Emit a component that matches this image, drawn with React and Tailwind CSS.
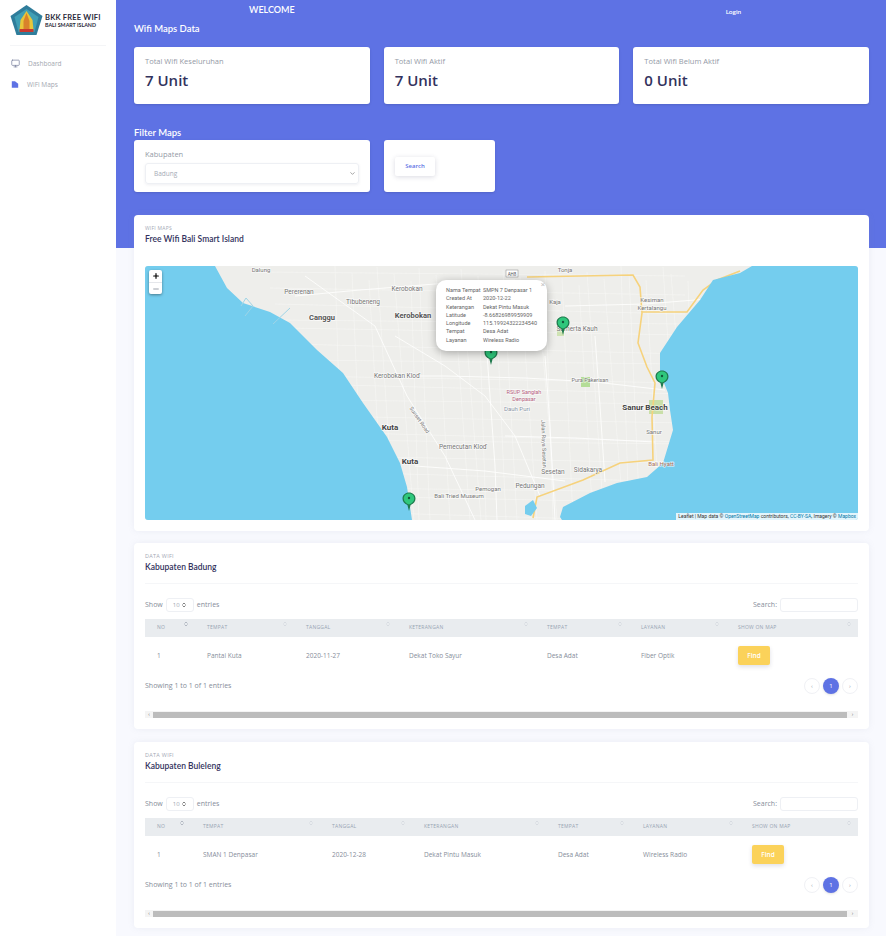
import React from 'react'
import { Monitor, ChevronsUpDown, ChevronDown, Plus, Minus } from 'lucide-react'

const STATS = [
  { label: 'Total Wifi Keseluruhan', value: '7 Unit' },
  { label: 'Total Wifi Aktif', value: '7 Unit' },
  { label: 'Total Wifi Belum Aktif', value: '0 Unit' },
]

const POPUP = [
  ['Nama Tempat', 'SMPN 7 Denpasar 1'],
  ['Created At', '2020-12-22'],
  ['Keterangan', 'Dekat Pintu Masuk'],
  ['Latitude', '-8.66826989959909'],
  ['Longitude', '115.19924322234540'],
  ['Tempat', 'Desa Adat'],
  ['Layanan', 'Wireless Radio'],
]

const HEADERS = ['NO', 'TEMPAT', 'TANGGAL', 'KETERANGAN', 'TEMPAT', 'LAYANAN', 'SHOW ON MAP']

// Thin street mesh for the built-up part of the map
const STREETS = []
for (let i = 0; i < 26; i++) {
  const x = 190 + i * 14 + (i % 3) * 3
  STREETS.push(`M${x} ${(i * 7) % 20} L${x + 8 + (i % 5) * 3} 254`)
}
for (let i = 0; i < 18; i++) {
  const y = 6 + i * 14 + (i % 4) * 2
  STREETS.push(`M${120 + i * 5} ${y} L540 ${y + 4 + (i % 3) * 3}`)
}

function Pin({ x, y }) {
  return (
    <g transform={`translate(${x} ${y})`}>
      <path d="M0 0 L-1.6 -6 C-5 -7.5 -6.5 -9.5 -6.5 -12.5 C-6.5 -16 -3.5 -18.5 0 -18.5 C3.5 -18.5 6.5 -16 6.5 -12.5 C6.5 -9.5 5 -7.5 1.6 -6 Z" fill="#1f7a4d" />
      <path d="M0 -6.5 C-3.4 -7.6 -5.2 -9.8 -5.2 -12.5 C-5.2 -15.4 -2.8 -17.4 0 -17.4 C2.8 -17.4 5.2 -15.4 5.2 -12.5 C5.2 -9.8 3.4 -7.6 0 -6.5 Z" fill="#2fc77c" />
      <circle cx="0" cy="-13" r="1.2" fill="#12583a" />
    </g>
  )
}

function MapLabel({ x, y, children, bold, color = '#777777', size = 6.5, rotate }) {
  return (
    <text
      x={x}
      y={y}
      fontSize={size}
      fontWeight={bold ? 700 : 400}
      fill={color}
      fontFamily="Roboto, sans-serif"
      textAnchor="middle"
      stroke="#ffffff"
      strokeWidth="1.5"
      strokeOpacity="0.6"
      paintOrder="stroke"
      transform={rotate ? `rotate(${rotate} ${x} ${y})` : undefined}
    >
      {children}
    </text>
  )
}

function MapDrawing() {
  return (
    <svg viewBox="0 0 713 254" className="block w-full h-full">
      <rect width="713" height="254" fill="#eeeeeb" />
      {/* street mesh */}
      <g stroke="#f8f8f6" strokeWidth="0.5" fill="none">
        {STREETS.map((d, i) => <path key={i} d={d} />)}
      </g>
      {/* bigger streets */}
      <g stroke="#ffffff" strokeWidth="0.9" fill="none" opacity="0.9">
        <path d="M160 10 L230 60 L262 130 L300 190 L330 254" />
        <path d="M150 30 L215 24 L290 18 L370 14" />
        <path d="M250 70 L300 100 L340 130 L370 170 L395 230" />
        <path d="M230 110 L300 110 L380 112 L450 116 L520 124" />
        <path d="M340 60 L345 130 L350 200 L352 254" />
        <path d="M400 90 L405 160 L410 254" />
        <path d="M420 40 L500 38 L600 30" />
        <path d="M360 170 L430 172 L510 176" />
        <path d="M270 200 L340 205 L420 215" />
        <path d="M450 70 L455 140 L460 216" />
      </g>
      {/* parks */}
      <rect x="436" y="111" width="9" height="10" fill="#b4dd97" />
      <rect x="504" y="134" width="14" height="14" fill="#c9dfa8" />
      <rect x="412" y="62" width="7" height="8" fill="#cfe3b4" />
      {/* main roads */}
      <g stroke="#f6d27c" strokeWidth="1.6" fill="none">
        <path d="M382 11 L488 9 L495 21 L497 47 L493 77 L502 101 L510 117 L507 151 L508 194 L475 197 L438 214 L392 231 L388 252" />
        <path d="M497 46 L542 46 L558 24 L572 14 L595 5" />
      </g>
      {/* sea */}
      <path d="M70 0 L82 22 L98 37 L125 46 L145 57 L172 84 L198 107 L218 137 L242 171 L255 197 L262 221 L267 254 L0 254 L0 0 Z" fill="#74cdee" />
      <path d="M607 0 L595 7 L568 14 L555 34 L532 61 L515 87 L515 107 L523 127 L525 144 L528 164 L518 197 L502 211 L472 217 L445 227 L418 241 L415 251 L417 254 L713 254 L713 0 Z" fill="#74cdee" />
      <path d="M380 240 L388 234 L392 242 L386 250 L380 248 Z" fill="#74cdee" />
      <path d="M96 40 L101 32 L108 40 L100 50 M128 58 L145 42" stroke="#9fd4e6" strokeWidth="1" fill="none" />
      {/* labels */}
      <MapLabel x="116" y="6" size={6}>Dalung</MapLabel>
      <MapLabel x="154" y="28">Pererenan</MapLabel>
      <MapLabel x="218" y="38">Tibubeneng</MapLabel>
      <MapLabel x="177" y="54" bold color="#555555" size={7.5}>Canggu</MapLabel>
      <MapLabel x="262" y="25">Kerobokan</MapLabel>
      <MapLabel x="268" y="52" bold color="#555555" size={7.5}>Kerobokan</MapLabel>
      <MapLabel x="252" y="112">Kerobokan Kloď</MapLabel>
      <MapLabel x="273" y="155" size={5.5} rotate={55}>Sunset Road</MapLabel>
      <MapLabel x="245" y="164" bold color="#444444" size={8}>Kuta</MapLabel>
      <MapLabel x="265" y="198" bold color="#444444" size={8}>Kuta</MapLabel>
      <MapLabel x="318" y="183">Pemecutan Kloď</MapLabel>
      <MapLabel x="314" y="232" size={6}>Bali Tried Museum</MapLabel>
      <MapLabel x="343" y="225" size={6}>Pemogan</MapLabel>
      <MapLabel x="385" y="222">Pedungan</MapLabel>
      <MapLabel x="408" y="208">Sesetan</MapLabel>
      <MapLabel x="443" y="206">Sidakarya</MapLabel>
      <MapLabel x="379" y="128" size={5.5} color="#b4607c">RSUP Sanglah</MapLabel>
      <MapLabel x="379" y="135" size={5.5} color="#b4607c">Denpasar</MapLabel>
      <MapLabel x="372" y="145" size={6} color="#8a94a6">Dauh Puri</MapLabel>
      <MapLabel x="397" y="178" size={5.5} rotate={88}>Jalan Raya Sesetan</MapLabel>
      <MapLabel x="445" y="116" size={5.5}>Pura Pakerisan</MapLabel>
      <MapLabel x="500" y="144" bold color="#444444" size={8}>Sanur Beach</MapLabel>
      <MapLabel x="509" y="168" size={6}>Sanur</MapLabel>
      <MapLabel x="516" y="200" size={6} color="#a8705c">Bali Hyatt</MapLabel>
      <MapLabel x="507" y="36" size={6}>Kesiman</MapLabel>
      <MapLabel x="507" y="44" size={6}>Kertalangu</MapLabel>
      <MapLabel x="420" y="6" size={6}>Tonja</MapLabel>
      <MapLabel x="410" y="38" size={6}>Kaja</MapLabel>
      <MapLabel x="432" y="65">Sumerta Kauh</MapLabel>
      <rect x="361" y="4" width="12" height="7" fill="#ffffff" stroke="#888888" strokeWidth="0.5" />
      <text x="367" y="9.6" fontSize="4.5" fill="#555555" textAnchor="middle" fontFamily="Roboto, sans-serif">AH8</text>
      <Pin x={264} y={245} />
      <Pin x={418} y={69} />
      <Pin x={517} y={123} />
      <Pin x={346} y={99} />
    </svg>
  )
}

function Leaflet() {
  return (
    <div className="relative h-[254px] rounded-[3px] overflow-hidden">
      <MapDrawing />

      <div className="absolute left-[4px] top-[4px] w-[13px] rounded-[2px] bg-white shadow-[0_1px_3px_rgba(0,0,0,0.4)] flex flex-col items-center text-black">
        <span className="h-[12px] flex items-center"><Plus size={8} strokeWidth={3.5} /></span>
        <span className="h-[12px] flex items-center border-t border-gray-200 w-full justify-center text-gray-500"><Minus size={8} strokeWidth={2} /></span>
      </div>

      {/* popup */}
      <div className="absolute left-[291px] top-[14px] w-[111px] h-[71px] pl-[10px] pt-[6px] bg-white rounded-[10px] shadow-[0_2px_8px_rgba(0,0,0,0.3)] text-[5.5px] leading-[8.3px] text-[#666] font-['Roboto',sans-serif]">
        <span className="absolute right-[2px] top-[0px] text-[8px] leading-[10px] text-[#c3c3c3]">×</span>
        {POPUP.map(([k, v]) => (
          <div key={k} className="flex whitespace-nowrap">
            <span className="w-[37px] shrink-0">{k}</span>
            <span>{v}</span>
          </div>
        ))}
      </div>

      <div className="absolute right-0 bottom-0 h-[7px] px-[2px] bg-white/80 text-[5px] leading-[7px] text-[#333] whitespace-nowrap font-['Roboto',sans-serif]">
        Leaflet | Map data © <span className="text-[#0078a8]">OpenStreetMap</span> contributors, <span className="text-[#0078a8]">CC-BY-SA</span>, Imagery © <span className="text-[#0078a8]">Mapbox</span>
      </div>
    </div>
  )
}

function DataTable({ title, gridClass, row }) {
  return (
    <section className="bg-white rounded-[4px] shadow-[0_0_6px_rgba(136,152,170,0.12)] px-[11px]">
      <div className="pt-[9px] pb-[9px] border-b border-[#f5f6f8]">
        <p className="text-[5.5px] leading-[8px] text-[#a4a9b5] tracking-wider">DATA WIFI</p>
        <h3 className="text-[8.5px] leading-[14px] font-semibold text-[#32325d] font-['Lato',sans-serif]">{title}</h3>
      </div>

      <div className="mt-[14px] flex items-center justify-between text-[7px] text-[#868d9a]">
        <div className="flex items-center gap-[3px]">
          <span>Show</span>
          <span className="w-[28px] h-[14px] border border-[#eef0f4] rounded-[3px] flex items-center justify-between px-[6px] text-[6px] text-[#a0a6b2]">
            10
            <ChevronsUpDown size={6} strokeWidth={3} className="text-[#555]" />
          </span>
          <span>entries</span>
        </div>
        <div className="flex items-center gap-[3px]">
          <span>Search:</span>
          <span className="w-[78px] h-[14px] border border-[#eef0f4] rounded-[3px]" />
        </div>
      </div>

      <div className={`mt-[7px] h-[18px] bg-[#e9ecef] grid ${gridClass} items-center text-[5px] tracking-wider text-[#98a4b3]`}>
        {HEADERS.map((h, i) => (
          <div key={i} className="relative pl-[12px] whitespace-nowrap">
            {h}
            <ChevronsUpDown size={6} className={i === 0 ? 'absolute right-[6px] -top-[3px] text-[#7a8494]' : 'absolute right-[6px] -top-[3px] text-[#c4cad3]'} />
          </div>
        ))}
      </div>

      <div className={`h-[37px] grid ${gridClass} items-center text-[6.5px] text-[#868d9a]`}>
        {row.map((c, i) => (
          <div key={i} className="pl-[12px] whitespace-nowrap">{c}</div>
        ))}
        <div className="pl-[12px]">
          <span className="flex w-[32px] h-[19px] items-center justify-center rounded-[2px] bg-[#fbd25a] shadow-[0_2px_4px_rgba(50,50,93,0.15)] text-[6.5px] font-semibold text-white">Find</span>
        </div>
      </div>

      <div className="mt-[4px] flex items-center justify-between">
        <span className="text-[7px] text-[#868d9a]">Showing 1 to 1 of 1 entries</span>
        <div className="flex items-center gap-[3px] text-[6px] text-[#9aa2ae]">
          <span className="w-[16px] h-[16px] rounded-full border border-[#f0f1f5] flex items-center justify-center">‹</span>
          <span className="w-[16px] h-[16px] rounded-full bg-[#5e72e4] flex items-center justify-center text-white shadow-sm">1</span>
          <span className="w-[16px] h-[16px] rounded-full border border-[#f0f1f5] flex items-center justify-center">›</span>
        </div>
      </div>

      <div className="mt-[17px] mb-[11px] h-[7px] flex items-center bg-[#f4f4f4] text-[#666]">
        <span className="w-[8px] text-[5px] leading-[7px] text-center">‹</span>
        <span className="flex-1 h-[6px] bg-[#bcbcbc]" />
        <span className="w-[11px] text-[5px] leading-[7px] text-center">›</span>
      </div>
    </section>
  )
}

export default function App() {
  return (
    <div className="flex w-[886px] h-[936px] overflow-hidden bg-[#f8f9fe] font-['Open_Sans',sans-serif]">
      {/* ── SIDEBAR ── */}
      <aside className="w-[116px] shrink-0 bg-white self-stretch">
        <div className="mx-[10px] pt-[5px] pb-[10px] border-b border-[#f4f5f7] flex items-center gap-[2px]">
          <svg viewBox="0 0 32 30" className="w-[33px] h-[30px] shrink-0">
            <path d="M16 0 L32 11 L26 30 L6 30 L0 11 Z" fill="#2f7d9b" />
            <path d="M16 4 L28 12 L24 27 L8 27 L4 12 Z" fill="#3f9fb5" />
            <path d="M16 6 L22 15 L23 25 L9 25 L10 15 Z" fill="#e8c63a" />
            <path d="M16 8 L19 16 L19 24 L13 24 L13 16 Z" fill="#d9822b" />
            <path d="M9 24 H23 V27 H9 Z" fill="#c9392f" />
          </svg>
          <div className="mt-[1px] font-['Lato',sans-serif] font-bold text-[#2a2a3a] whitespace-nowrap">
            <div className="text-[7.5px] leading-[9px] tracking-[0.2px]">BKK FREE WIFI</div>
            <div className="text-[5.3px] leading-[7px]">BALI SMART ISLAND</div>
          </div>
        </div>
        <nav className="mt-[7px] px-[11px] text-[6.5px] text-[#a3a7b0]">
          <div className="h-[21px] flex items-center gap-[8px]">
            <Monitor size={9} className="text-[#7d84a0]" />
            <span>Dashboard</span>
          </div>
          <div className="h-[21px] flex items-center gap-[8px]">
            <svg viewBox="0 0 10 10" className="w-[8px] h-[9px]"><path d="M1 1 L5 1 L9 4 L9 9 L1 9 Z" fill="#5e72e4" /></svg>
            <span>WiFi Maps</span>
          </div>
        </nav>
      </aside>

      {/* ── MAIN ── */}
      <main className="flex-1 min-w-0 pl-[18px] pr-[17px] bg-[linear-gradient(#5e72e4_248px,#f8f9fe_248px)]">
        <div className="h-[21px] flex items-start text-white font-['Lato',sans-serif]">
          <span className="ml-[115px] mt-[4px] text-[9px] leading-[12px] font-semibold">WELCOME</span>
          <span className="ml-[431px] mt-[7px] text-[6.5px] leading-[10px] font-semibold">Login</span>
        </div>
        <h2 className="text-[9.5px] leading-[16px] font-semibold text-white font-['Lato',sans-serif]">Wifi Maps Data</h2>

        <div className="mt-[10px] grid grid-cols-3 gap-[14px]">
          {STATS.map(s => (
            <div key={s.label} className="h-[57px] bg-white rounded-[3px] px-[11px] pt-[8px] shadow-sm">
              <p className="text-[7.5px] leading-[12px] text-[#949aa6]">{s.label}</p>
              <p className="mt-[3px] text-[15px] leading-[20px] font-semibold text-[#32325d]">{s.value}</p>
            </div>
          ))}
        </div>

        <h2 className="mt-[22px] text-[9.5px] leading-[14px] font-semibold text-white font-['Lato',sans-serif]">Filter Maps</h2>

        <div className="flex gap-[14px]">
          <div className="w-[236px] h-[52px] bg-white rounded-[3px] px-[11px] pt-[8px] shadow-sm">
            <p className="text-[7.5px] leading-[12px] text-[#949aa6]">Kabupaten</p>
            <div className="mt-[3px] h-[21px] border border-[#eef0f4] rounded-[3px] flex items-center justify-between pl-[8px] pr-[2px] shadow-[0_1px_3px_rgba(50,50,93,0.08)]">
              <span className="text-[6.5px] text-[#a5abb6]">Badung</span>
              <ChevronDown size={7} className="text-[#666]" />
            </div>
          </div>
          <div className="w-[111px] h-[52px] bg-white rounded-[3px] px-[11px] pt-[1px] flex items-center shadow-sm">
            <span className="flex w-[40px] h-[19px] items-center justify-center rounded-[2px] bg-white shadow-[0_1px_5px_rgba(50,50,93,0.18)] text-[6px] font-semibold text-[#5e72e4]">Search</span>
          </div>
        </div>

        <section className="mt-[23px] bg-white rounded-[4px] shadow-[0_0_6px_rgba(136,152,170,0.12)] px-[11px] pt-[9px] pb-[11px]">
          <p className="text-[5px] leading-[8px] text-[#a4a9b5] tracking-wider">WIFI MAPS</p>
          <h3 className="mb-[20px] text-[8.5px] leading-[14px] font-semibold text-[#32325d] font-['Lato',sans-serif]">Free Wifi Bali Smart Island</h3>
          <Leaflet />
        </section>

        <div className="mt-[12px] flex flex-col gap-[13px]">
          <DataTable
            title="Kabupaten Badung"
            gridClass="grid-cols-[50px_99px_103px_138px_94px_97px_132px]"
            row={['1', 'Pantai Kuta', '2020-11-27', 'Dekat Toko Sayur', 'Desa Adat', 'Fiber Optik']}
          />
          <DataTable
            title="Kabupaten Buleleng"
            gridClass="grid-cols-[46px_129px_92px_134px_85px_109px_118px]"
            row={['1', 'SMAN 1 Denpasar', '2020-12-28', 'Dekat Pintu Masuk', 'Desa Adat', 'Wireless Radio']}
          />
        </div>
      </main>
    </div>
  )
}
